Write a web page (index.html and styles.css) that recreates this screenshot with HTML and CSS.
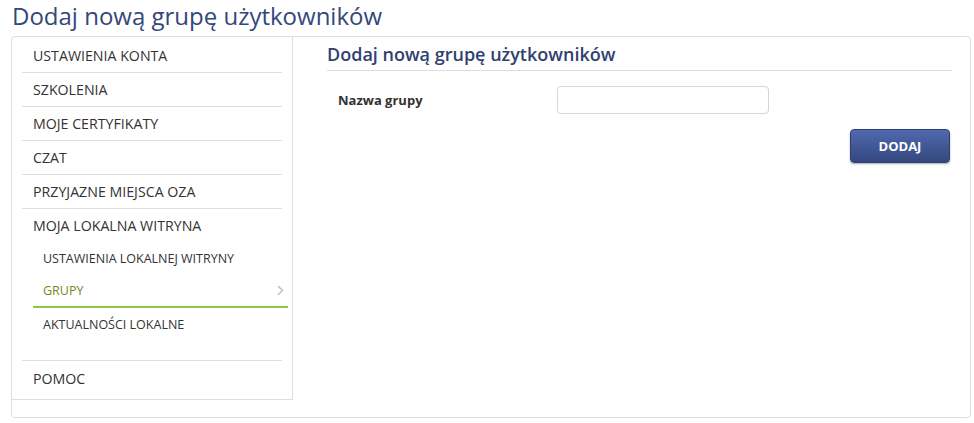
FILE: index.html
```html
<!DOCTYPE html>
<html lang="pl">
<head>
<meta charset="utf-8">
<title>Dodaj nową grupę użytkowników</title>
<link rel="stylesheet" href="styles.css">
</head>
<body>
<h1 class="page-title">Dodaj nową grupę użytkowników</h1>
<div class="panel">
    <ul class="side-menu">
        <li class="menu-item"><a href="#">Ustawienia konta</a></li>
        <li class="menu-item"><a href="#">Szkolenia</a></li>
        <li class="menu-item"><a href="#">Moje certyfikaty</a></li>
        <li class="menu-item"><a href="#">Czat</a></li>
        <li class="menu-item"><a href="#">Przyjazne miejsca OZA</a></li>
        <li class="menu-item open">
            <a href="#">Moja lokalna witryna</a>
            <ul class="sub-menu">
                <li class="sub-item"><a href="#">Ustawienia lokalnej witryny</a></li>
                <li class="sub-item active">
                    <a href="#">Grupy</a>
                    <svg class="chevron" width="7" height="11" viewBox="0 0 7 11"><path d="M1 1 L5.5 5.5 L1 10" fill="none" stroke="#c4c4c4" stroke-width="1.6"/></svg>
                </li>
                <li class="sub-item"><a href="#">Aktualności lokalne</a></li>
            </ul>
        </li>
        <li class="menu-item last"><a href="#">Pomoc</a></li>
    </ul>
    <div class="content">
        <h2 class="section-title">Dodaj nową grupę użytkowników</h2>
        <form class="group-form">
            <div class="form-row">
                <label for="tbxName">Nazwa grupy</label>
                <input type="text" id="tbxName" name="tbxName">
            </div>
            <div class="form-actions">
                <button type="submit" class="btn-add">Dodaj</button>
            </div>
        </form>
    </div>
</div>
</body>
</html>
```
FILE: styles.css
```css
body{
    margin:0px;
    font-family:"Open Sans","Liberation Sans",sans-serif;
    color:#333333;
    background-color:white;
}
a{
    color:inherit;
    text-decoration:none;
}
.page-title{
    margin:0px;
    padding:0px 0px 0px 12px;
    height:36px;
    line-height:32px;
    font-size:24px;
    font-weight:normal;
    color:#34477a;
}
.panel{
    display:flex;
    margin-left:11px;
    width:958px;
    height:380px;
    border:1px solid #dddddd;
    border-radius:4px;
}
.side-menu{
    list-style:none;
    margin:0px;
    padding:2px 10px 0px 10px;
    width:260px;
    height:360px;
    border-right:1px solid #dddddd;
    border-bottom:1px solid #dddddd;
    flex-shrink:0;
}
.menu-item > a{
    display:block;
    height:33px;
    line-height:33px;
    padding-left:11px;
    font-size:14.2px;
    text-transform:uppercase;
    color:#333333;
}
.menu-item{
    border-bottom:1px solid #dddddd;
}
.menu-item.open{
    padding-bottom:19px;
}
.menu-item.last{
    border-bottom:none;
}
.menu-item.last > a{
    height:36px;
    line-height:36px;
}
.sub-menu{
    list-style:none;
    margin:0px;
    padding:0px;
}
.sub-item{
    display:flex;
    justify-content:space-between;
    align-items:center;
    height:33px;
    line-height:33px;
    margin-left:11px;
    padding-left:10px;
    font-size:12.5px;
    text-transform:uppercase;
}
.sub-item.active{
    height:31px;
    margin-right:-6px;
    border-bottom:2px solid #8dc63f;
    color:#728a1f;
}
.chevron{
    margin-right:4px;
    margin-top:-1px;
}
.content{
    flex:1;
    padding:6px 18px 0px 34px;
}
.section-title{
    margin:0px;
    height:27px;
    line-height:22px;
    font-size:18px;
    font-weight:600;
    color:#2f4170;
    border-bottom:1px solid #dddddd;
}
.form-row{
    display:flex;
    align-items:center;
    margin-top:15px;
    padding-left:11px;
}
.form-row label{
    width:219px;
    font-size:13px;
    font-weight:bold;
    color:#333333;
}
.form-row input{
    margin:0px;
    padding:0px 6px;
    box-sizing:border-box;
    width:212px;
    height:28px;
    border:1px solid #d6d6d6;
    border-radius:4px;
}
.form-actions{
    display:flex;
    justify-content:flex-end;
    margin-top:15px;
    padding-right:2px;
}
.btn-add{
    width:100px;
    height:34px;
    font-family:"Open Sans","Liberation Sans",sans-serif;
    font-size:13px;
    font-weight:bold;
    text-transform:uppercase;
    color:white;
    border:1px solid #2f3f72;
    border-radius:4px;
    background:linear-gradient(#5069ad,#34487f);
    box-shadow:0px 1px 2px rgba(0,0,0,0.35);
}
```
